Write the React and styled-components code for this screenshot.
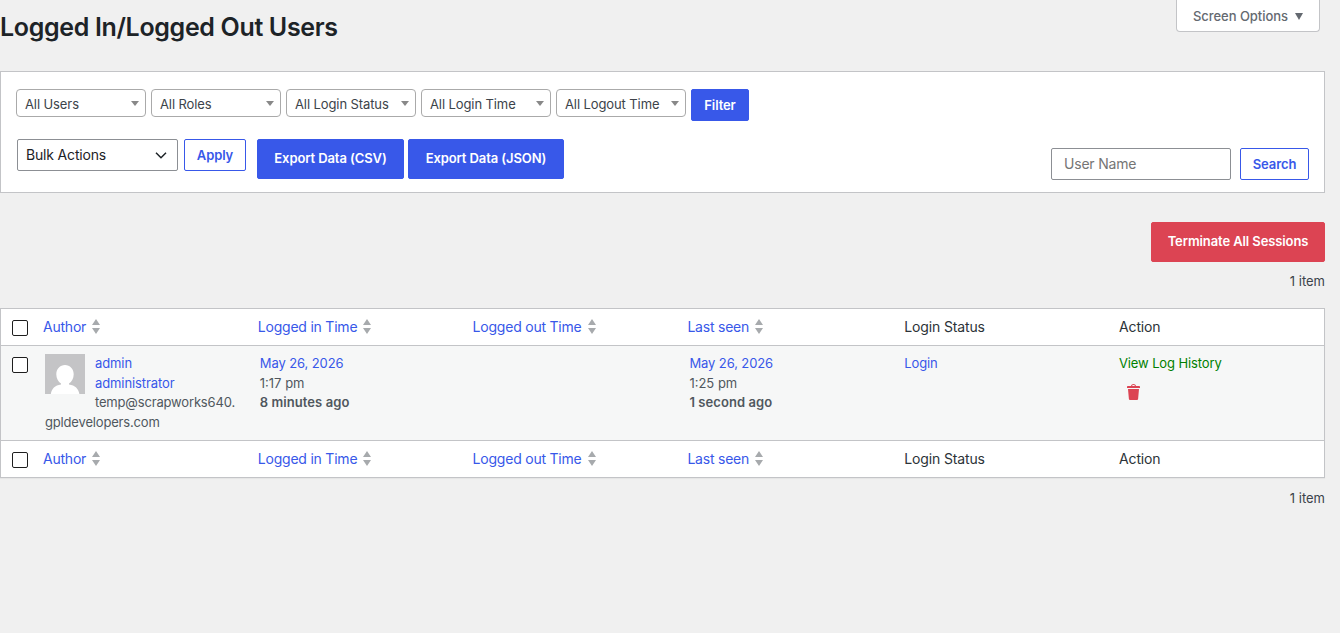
import React from 'react';
import styled, { createGlobalStyle } from 'styled-components';

const GlobalStyle = createGlobalStyle`
  * {
    box-sizing: border-box;
  }
  body {
    margin: 0;
    background: #f0f0f0;
    color: #3c434a;
    font-family: Inter, 'Liberation Sans', sans-serif;
    font-size: 13px;
    line-height: 1.5;
  }
`;

const FILTERS = ['All Users', 'All Roles', 'All Login Status', 'All Login Time', 'All Logout Time'];

const COLUMNS = [
  { label: 'Author', sortable: true },
  { label: 'Logged in Time', sortable: true },
  { label: 'Logged out Time', sortable: true },
  { label: 'Last seen', sortable: true },
  { label: 'Login Status' },
  { label: 'Action' },
];

const SortIcon = () => (
  <svg width="8" height="15" viewBox="0 0 8 15" fill="#a7aaad">
    <path d="M4 0l4 6H0zM0 9h8l-4 6z" />
  </svg>
);

const DownArrow = ({ width = 8, height = 5, color = '#888' }) => (
  <svg width={width} height={height} viewBox="0 0 8 5" preserveAspectRatio="none" fill={color}>
    <path d="M0 0h8L4 5z" />
  </svg>
);

const Chevron = () => (
  <svg width="12" height="7" viewBox="0 0 12 7" fill="none" stroke="#1d2327" strokeWidth="1.5">
    <path d="M1 .8l5 4.9L11 .8" />
  </svg>
);

const TrashIcon = () => (
  <svg width="20" height="20" viewBox="0 0 20 20" fill="#dc4453">
    <path d="M12 4h3c.6 0 1 .4 1 1v1H3V5c0-.6.5-1 1-1h3c.2-1.1 1.3-2 2.5-2s2.3.9 2.5 2zM8 4h3c-.2-.6-.9-1-1.500-1S8.200 3.400 8 4zM4 7h11l-.9 10.100c0 .5-.5.9-1 .9H5.900c-.5 0-.9-.4-1-.9L4 7z" />
  </svg>
);

const Avatar = () => (
  <AvatarSvg width="40" height="40" viewBox="0 0 40 40">
    <rect width="40" height="40" fill="#c4c4c6" />
    <path
      fill="#fff"
      d="M20 11c5 0 8.700 4 8.700 9.200 0 4-2 7.600-4.700 9.300v.9c6 .8 9.600 4.200 10.400 9.600H5.800c.8-5.400 4.200-8.800 10.200-9.600v-.9c-2.700-1.700-4.700-5.300-4.700-9.300C11.300 15 15 11 20 11z"
    />
  </AvatarSvg>
);

const HeadRow = () => (
  <Row>
    <CheckCell>
      <Checkbox />
    </CheckCell>
    {COLUMNS.map(({ label, sortable }) => (
      <HeadCell key={label} $sortable={sortable}>
        <span>{label}</span>
        {sortable && <SortIcon />}
      </HeadCell>
    ))}
  </Row>
);

const App = () => {
  return (
    <>
      <GlobalStyle />
      <Page>
        <Header>
          <Title>Logged In/Logged Out Users</Title>
          <ScreenOptions>
            Screen Options
            <DownArrow width={8} height={7} color="#646970" />
          </ScreenOptions>
        </Header>

        <Panel>
          <FilterRow>
            {FILTERS.map((label) => (
              <FilterSelect key={label}>
                {label}
                <DownArrow />
              </FilterSelect>
            ))}
            <Button $primary $width={58}>
              Filter
            </Button>
          </FilterRow>
          <ActionRow>
            <BulkSelect>
              Bulk Actions
              <Chevron />
            </BulkSelect>
            <Button $width={62}>Apply</Button>
            <ExportGroup>
              <Button $primary $large $width={147}>
                Export Data (CSV)
              </Button>
              <Button $primary $large $width={156}>
                Export Data (JSON)
              </Button>
            </ExportGroup>
            <SearchBox>
              <SearchInput placeholder="User Name" />
              <Button $width={69}>Search</Button>
            </SearchBox>
          </ActionRow>
        </Panel>

        <TopNav>
          <Button $danger $large $width={174}>
            Terminate All Sessions
          </Button>
          <ItemCount>1 item</ItemCount>
        </TopNav>

        <Table>
          <HeadRow />
          <Row $body>
            <CheckCell>
              <Checkbox />
            </CheckCell>
            <Cell>
              <Avatar />
              <Link>admin</Link>
              <br />
              <Link>administrator</Link>
              <br />
              <Email>
                temp@scrapworks640.
                <br />
                gpldevelopers.com
              </Email>
            </Cell>
            <Cell>
              <Link>May 26, 2026</Link>
              <br />
              1:17 pm
              <br />
              <Ago>8 minutes ago</Ago>
            </Cell>
            <Cell />
            <Cell>
              <Link>May 26, 2026</Link>
              <br />
              1:25 pm
              <br />
              <Ago>1 second ago</Ago>
            </Cell>
            <Cell>
              <Link>Login</Link>
            </Cell>
            <Cell>
              <HistoryLink>View Log History</HistoryLink>
              <TrashButton>
                <TrashIcon />
              </TrashButton>
            </Cell>
          </Row>
          <HeadRow />
        </Table>

        <BottomNav>
          <ItemCount>1 item</ItemCount>
        </BottomNav>
      </Page>
    </>
  );
};

const Page = styled.div`
  width: 1325px;
  min-height: 633px;
`;

const Header = styled.header`
  display: flex;
  justify-content: space-between;
  align-items: flex-start;
  height: 71px;
`;

const Title = styled.h1`
  margin: 0;
  padding-top: 9px;
  color: #1d2327;
  font-size: 25px;
  font-weight: 600;
  line-height: 36px;
  letter-spacing: -0.34px;
`;

const ScreenOptions = styled.div`
  display: flex;
  align-items: center;
  gap: 7px;
  width: 144px;
  height: 32px;
  margin-right: 5px;
  padding: 2px 0 0 16px;
  color: #646970;
  background: #fff;
  border: 1px solid #c3c4c7;
  border-top: 0;
  border-radius: 0 0 4px 4px;
  font-weight: 500;
  letter-spacing: -0.05px;
`;

const Panel = styled.section`
  height: 122px;
  padding: 17px 15px 0;
  background: #fff;
  border: 1px solid #c3c4c7;
`;

const FilterRow = styled.div`
  display: flex;
  align-items: flex-start;
  gap: 5px;
  height: 50px;
`;

const FilterSelect = styled.div`
  display: flex;
  align-items: center;
  justify-content: space-between;
  width: 130px;
  height: 28px;
  padding: 3px 6px 0 8px;
  color: #3c434a;
  border: 1px solid #aaa;
  border-radius: 4px;
  letter-spacing: -0.1px;

  svg {
    margin-bottom: 3px;
  }
`;

const ActionRow = styled.div`
  display: flex;
  align-items: flex-start;
  padding-left: 1px;
`;

const BulkSelect = styled.div`
  display: flex;
  align-items: center;
  justify-content: space-between;
  width: 161px;
  height: 32px;
  margin-right: 6px;
  padding: 0 10px 1px 8px;
  color: #1d2327;
  border: 1px solid #8c8f94;
  border-radius: 2px;
  font-size: 14px;
  letter-spacing: -0.17px;

  svg {
    margin-top: 2px;
  }
`;

const getBackground = ({ $primary, $danger }) => {
  if ($danger) return '#dc4453';
  return $primary ? '#3858e9' : '#fff';
};

const Button = styled.button`
  width: ${({ $width }) => $width}px;
  height: ${({ $large }) => ($large ? 40 : 32)}px;
  padding: 0 0 ${({ $large }) => ($large ? 2 : 0)}px;
  color: ${({ $primary, $danger }) => ($primary || $danger ? '#fff' : '#3858e9')};
  background: ${getBackground};
  border: 1px solid ${({ $danger }) => ($danger ? '#dc4453' : '#3858e9')};
  border-radius: 2px;
  font-family: inherit;
  font-size: 13px;
  font-weight: 600;
  letter-spacing: -0.1px;
  white-space: nowrap;
`;

const ExportGroup = styled.div`
  display: flex;
  gap: 4px;
  margin-left: 11px;
`;

const SearchBox = styled.div`
  display: flex;
  gap: 9px;
  margin: 9px 0 0 auto;
`;

const SearchInput = styled.input`
  width: 180px;
  height: 32px;
  padding: 0 12px 2px;
  border: 1px solid #8c8f94;
  border-radius: 2px;
  font-family: inherit;
  font-size: 14px;
  letter-spacing: -0.2px;

  &::placeholder {
    color: #757575;
    opacity: 1;
  }
`;

const TopNav = styled.div`
  display: flex;
  flex-direction: column;
  align-items: flex-end;
  gap: 9px;
  height: 115px;
  padding-top: 29px;
`;

const BottomNav = styled.div`
  display: flex;
  justify-content: flex-end;
  padding-top: 10px;
`;

const ItemCount = styled.span`
  line-height: 20px;
`;

const Table = styled.div`
  background: #fff;
  border: 1px solid #c3c4c7;
  box-shadow: 0 1px 1px rgba(0, 0, 0, 0.04);
`;

const Row = styled.div`
  display: grid;
  grid-template-columns: 34px repeat(6, 214.8px);
  height: ${({ $body }) => ($body ? 96 : 36)}px;
  background: ${({ $body }) => ($body ? '#f6f7f7' : '#fff')};
  border: solid #c3c4c7;
  border-width: ${({ $body }) => ($body ? '1px 0' : '0')};
`;

const CheckCell = styled.div`
  padding: 11px 0 0 11px;
`;

const Checkbox = styled.input.attrs({ type: 'checkbox' })`
  display: block;
  appearance: none;
  width: 16px;
  height: 16px;
  margin: 0;
  background: #fff;
  border: 1px solid #1e1e1e;
  border-radius: 2px;
`;

const HeadCell = styled.div`
  display: flex;
  align-items: center;
  gap: 6px;
  padding: 0 0 2px ${({ $sortable }) => ($sortable ? 8 : 10)}px;
  color: ${({ $sortable }) => ($sortable ? '#3858e9' : '#2c3338')};
  font-size: 14px;
  letter-spacing: ${({ $sortable }) => ($sortable ? -0.22 : -0.13)}px;
`;

const Cell = styled.div`
  padding: 8px 0 8px 10px;
  color: #50575e;
  white-space: nowrap;
`;

const AvatarSvg = styled.svg`
  float: left;
  margin-right: 10px;
`;

const Link = styled.a`
  color: #3858e9;
  letter-spacing: -0.1px;
`;

const Email = styled.span`
  letter-spacing: -0.17px;
`;

const Ago = styled.b`
  font-weight: 600;
  letter-spacing: 0.07px;
`;

const HistoryLink = styled.a`
  color: #008000;
  letter-spacing: -0.12px;
`;

const TrashButton = styled.div`
  height: 20px;
  margin: 8px 0 0 5px;
`;

export default App;
